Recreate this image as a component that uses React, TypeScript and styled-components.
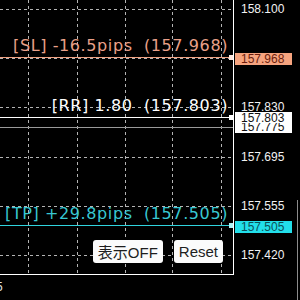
import styled, { createGlobalStyle } from "styled-components";

const GlobalStyle = createGlobalStyle`
  html, body {
    margin: 0;
    padding: 0;
    background: #000;
  }
  body {
    width: 300px;
    height: 300px;
    overflow: hidden;
  }
`;

const PLOT_W = 233;
const PLOT_H = 274;

const gridX = [28, 77, 125, 172, 221];
const gridY = [9, 58, 107, 157, 206, 255];

const axisLabels = [
  { y: 9, text: "158.100" },
  { y: 107, text: "157.830" },
  { y: 157, text: "157.695" },
  { y: 206, text: "157.555" },
  { y: 255, text: "157.420" },
];

type Level = {
  y: number;
  line: string;
  marker: string;
  text: string;
  textColor: string;
  price: string;
  tagTop: number;
  tagHeight: number;
  tagBg: string;
  tagColor: string;
};

const levels: Level[] = [
  {
    y: 57,
    line: "#f0a283",
    marker: "#fde8df",
    text: "[SL] -16.5pips  (157.968)",
    textColor: "#e9a089",
    price: "157.968",
    tagTop: 53,
    tagHeight: 12,
    tagBg: "#f6a47f",
    tagColor: "#6a1c0c",
  },
  {
    y: 117,
    line: "#ffffff",
    marker: "#ffffff",
    text: "[RR] 1.80  (157.803)",
    textColor: "#ffffff",
    price: "157.803",
    tagTop: 112,
    tagHeight: 11,
    tagBg: "#ffffff",
    tagColor: "#111111",
  },
  {
    y: 225,
    line: "#30d4de",
    marker: "#aef3f7",
    text: "[TP] +29.8pips  (157.505)",
    textColor: "#38c8d2",
    price: "157.505",
    tagTop: 221,
    tagHeight: 12,
    tagBg: "#22dfea",
    tagColor: "#0c4f58",
  },
];

const BID_Y = 127;

export default function App() {
  return (
    <>
      <GlobalStyle />
      <Root>
        <Main>
          <Plot>
            <svg
              width={PLOT_W}
              height={PLOT_H}
              style={{ position: "absolute", left: 0, top: 0 }}
              shapeRendering="crispEdges"
            >
              {gridY.map((y) => (
                <line
                  key={`h${y}`}
                  x1={0}
                  x2={PLOT_W}
                  y1={y + 0.5}
                  y2={y + 0.5}
                  stroke="#b4b4b4"
                  strokeDasharray="3 3"
                />
              ))}
              {gridX.map((x) => (
                <line
                  key={`v${x}`}
                  x1={x + 0.5}
                  x2={x + 0.5}
                  y1={0}
                  y2={PLOT_H}
                  stroke="#b4b4b4"
                  strokeDasharray="3 3"
                />
              ))}
              <line x1={0} x2={PLOT_W} y1={BID_Y + 0.5} y2={BID_Y + 0.5} stroke="#9a9a9a" />
              {levels.map((l) => (
                <g key={l.price}>
                  <line x1={0} x2={PLOT_W} y1={l.y + 0.5} y2={l.y + 0.5} stroke={l.line} />
                  <rect x={229} y={l.y - 2} width={4} height={5} fill={l.marker} />
                </g>
              ))}
            </svg>
            {levels.map((l) => (
              <LevelLabel key={l.price} $color={l.textColor} style={{ bottom: PLOT_H - l.y + 3 }}>
                {l.text}
              </LevelLabel>
            ))}
            <ButtonBar>
              <ChartButton>表示OFF</ChartButton>
              <ChartButton>Reset</ChartButton>
            </ButtonBar>
          </Plot>
          <Axis>
            {axisLabels.map((a) => (
              <AxisLabel key={a.text} style={{ top: a.y - 7 }}>
                {a.text}
              </AxisLabel>
            ))}
            <PriceTag $bg="#ffffff" $color="#111111" $h={10} style={{ top: 123 }}>
              <TagText style={{ marginTop: -2 }}>157.775</TagText>
            </PriceTag>
            {levels.map((l) => (
              <PriceTag
                key={l.price}
                $bg={l.tagBg}
                $color={l.tagColor}
                $h={l.tagHeight}
                style={{ top: l.tagTop }}
              >
                <TagText>{l.price}</TagText>
              </PriceTag>
            ))}
            <EdgeLine />
          </Axis>
        </Main>
        <TimeAxis>
          <TimeLabel>5</TimeLabel>
        </TimeAxis>
      </Root>
    </>
  );
}

const Root = styled.div`
  position: relative;
  width: 300px;
  height: 300px;
  background: #000;
  display: flex;
  flex-direction: column;
  overflow: hidden;
`;

const Main = styled.div`
  display: flex;
  flex-direction: row;
`;

const Plot = styled.div`
  position: relative;
  width: ${PLOT_W}px;
  height: ${PLOT_H}px;
  border-right: 1px solid #ffffff;
  border-bottom: 1px solid #ffffff;
  overflow: hidden;
`;

const LevelLabel = styled.div<{ $color: string }>`
  position: absolute;
  right: 5px;
  font-family: "DejaVu Sans", Verdana, sans-serif;
  font-size: 16px;
  line-height: 16px;
  letter-spacing: 0.6px;
  white-space: pre;
  color: ${(p) => p.$color};
`;

const ButtonBar = styled.div`
  position: absolute;
  right: 10px;
  bottom: 11px;
  display: flex;
  gap: 11px;
`;

const ChartButton = styled.div`
  height: 23px;
  padding: 0 5px;
  display: flex;
  align-items: center;
  background: #fbfbfb;
  border-radius: 3px;
  font-family: "Liberation Sans", "Noto Sans CJK JP", sans-serif;
  font-size: 15px;
  color: #1e1e1e;
`;

const Axis = styled.div`
  position: relative;
  flex: 1;
  overflow: visible;
`;

const EdgeLine = styled.div`
  position: absolute;
  left: 63px;
  top: 200px;
  width: 1px;
  height: 100px;
  background: #8c8c8c;
`;

const AxisLabel = styled.div`
  position: absolute;
  left: 7px;
  height: 14px;
  line-height: 14px;
  font-family: "Liberation Sans", Arial, sans-serif;
  font-size: 12px;
  color: #f2f2f2;
`;

const PriceTag = styled.div<{ $bg: string; $color: string; $h: number }>`
  position: absolute;
  left: 1px;
  width: 57px;
  height: ${(p) => p.$h}px;
  background: ${(p) => p.$bg};
  color: ${(p) => p.$color};
  overflow: hidden;
  display: flex;
  align-items: center;
  padding-left: 6px;
  box-sizing: border-box;
`;

const TagText = styled.span`
  font-family: "Liberation Sans", Arial, sans-serif;
  font-size: 12px;
  line-height: 12px;
`;

const TimeAxis = styled.div`
  flex: 1;
  padding-top: 5px;
`;

const TimeLabel = styled.div`
  margin-left: -4px;
  font-family: "Liberation Sans", Arial, sans-serif;
  font-size: 12px;
  line-height: 14px;
  color: #e6e6e6;
`;
